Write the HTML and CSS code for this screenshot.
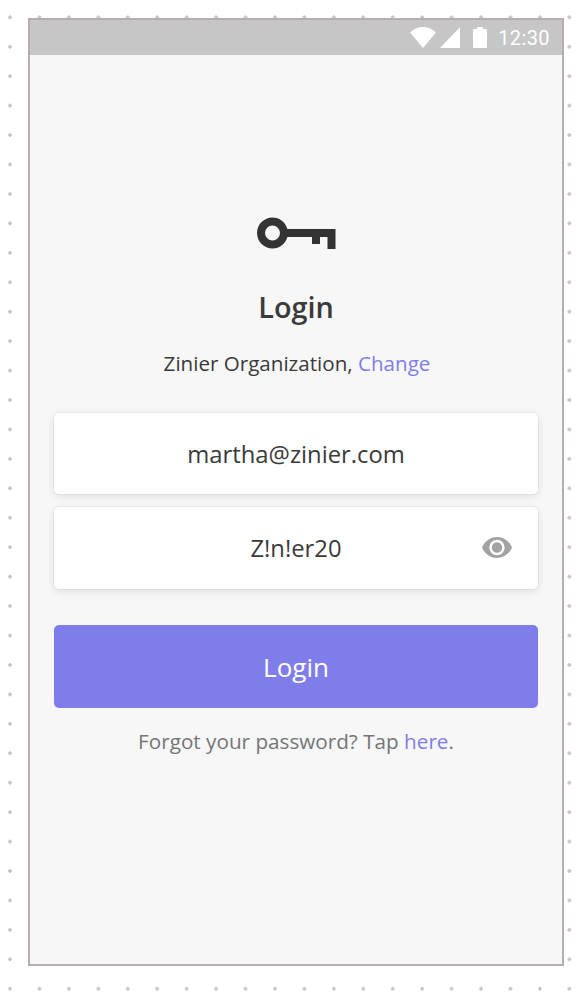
FILE: index.html
```html
<!DOCTYPE html>
<html lang="en">
<head>
    <meta charset="UTF-8">
    <meta name="viewport" content="width=device-width, initial-scale=1.0">
    <title>Login</title>
    <link rel="stylesheet" href="styles.css">
</head>
<body>

<div class="phone">
    <div class="status-bar">
        <svg class="status-wifi" viewBox="0 0 26 21"><path d="M0 5.500C3.500 2 8 0 13 0s9.500 2 13 5.500L13 21z"/></svg>
        <svg class="status-signal" viewBox="0 0 20 21"><path d="M20 0v21H0z"/></svg>
        <svg class="status-battery" viewBox="0 0 14 21"><path d="M4 0h6v2h3a1 1 0 0 1 1 1v17a1 1 0 0 1-1 1H1a1 1 0 0 1-1-1V3a1 1 0 0 1 1-1h3z"/></svg>
        <span class="status-time">12:30</span>
    </div>

    <div class="login">
        <svg class="key-icon" viewBox="0 0 79 32"><path fill-rule="evenodd" d="M15.500 0.500c7 0 12.900 4.600 14.900 11.500H78.500v20h-8V20h-7.500v7h-8v-7H30.400c-2 6.900-7.900 11.500-14.900 11.500C7 31.500 0 24.500 0 16S7 0.500 15.500 0.500zm0 8a7.500 7.500 0 1 0 0 15 7.500 7.500 0 0 0 0-15z"/></svg>
        <h1>Login</h1>
        <p class="org">Zinier Organization, <a href="#">Change</a></p>

        <div class="field">martha@zinier.com</div>
        <div class="field password">
            Z!n!er20
            <svg class="eye-icon" viewBox="0 0 30 21"><path fill-rule="evenodd" d="M15 0c6.800 0 12.400 4.400 15 10.500C27.400 16.600 21.800 21 15 21S2.600 16.600 0 10.500C2.600 4.400 8.200 0 15 0zm0 2.800a7.700 7.700 0 1 0 0 15.400 7.700 7.700 0 0 0 0-15.400zm0 2.500a5.200 5.200 0 1 1 0 10.400 5.200 5.200 0 0 1 0-10.400z"/></svg>
        </div>

        <button class="login-button">Login</button>
        <p class="forgot">Forgot your password? Tap <a href="#">here</a>.</p>
    </div>
</div>

</body>
</html>
```

FILE: styles.css
```css
html, body {
    height: 100%;
}
body {
    margin: 0;
    box-sizing: border-box;
    padding: 18px 22px 30px 28px;
    font-family: 'Open Sans', sans-serif;
    color: #3a3a3a;
    background-color: #ffffff;
    background-image: radial-gradient(circle, #c4c4c4 1.5px, transparent 1.9px);
    background-size: 29.45px 29.45px;
    background-position: -4.700px 2.600px;
}
a {
    color: #7f7dea;
    text-decoration: none;
}
.phone {
    height: 948px;
    box-sizing: border-box;
    border: 2px solid #b5aeb0;
    background-color: #f7f7f7;
    display: flex;
    flex-direction: column;
}
.status-bar {
    height: 35px;
    flex-shrink: 0;
    background-color: #c6c6c6;
    display: flex;
    align-items: center;
    justify-content: flex-end;
    padding-right: 12px;
    color: #ffffff;
}
.status-bar svg {
    fill: #ffffff;
    display: block;
}
.status-wifi {
    width: 26px;
    height: 21px;
    margin-right: 4px;
}
.status-signal {
    width: 20px;
    height: 21px;
    margin-right: 13px;
}
.status-battery {
    width: 14px;
    height: 21px;
    margin-right: 11px;
}
.status-time {
    font-family: 'Roboto', sans-serif;
    font-size: 20px;
    letter-spacing: 0.4px;
}
.login {
    padding: 162px 24px 0;
    display: flex;
    flex-direction: column;
    align-items: stretch;
    text-align: center;
}
.key-icon {
    width: 79px;
    height: 32px;
    fill: #333333;
    align-self: center;
    display: block;
}
h1 {
    margin: 39px 0 0;
    font-size: 28.800px;
    line-height: 38px;
    font-weight: 600;
}
.org {
    margin: 24px 0 0;
    padding-left: 2px;
    font-size: 20.600px;
    line-height: 27px;
}
.field {
    height: 81px;
    margin-top: 36px;
    background-color: #ffffff;
    border-radius: 5px;
    box-shadow: 0 0 0 1px rgba(0, 0, 0, 0.03), 0 2px 8px rgba(0, 0, 0, 0.11);
    font-size: 23.800px;
    display: flex;
    align-items: center;
    justify-content: center;
    position: relative;
}
.password {
    margin-top: 13px;
    height: 82px;
}
.eye-icon {
    position: absolute;
    right: 26px;
    top: 30px;
    width: 30px;
    height: 21px;
    fill: #a2a2a2;
}
.login-button {
    margin-top: 36px;
    height: 83px;
    border: none;
    border-radius: 5px;
    background-color: #7f7dea;
    color: #ffffff;
    font-family: inherit;
    font-size: 26px;
}
.forgot {
    margin: 20px 0 0;
    font-size: 20.700px;
    line-height: 27px;
    color: #757575;
}
```
